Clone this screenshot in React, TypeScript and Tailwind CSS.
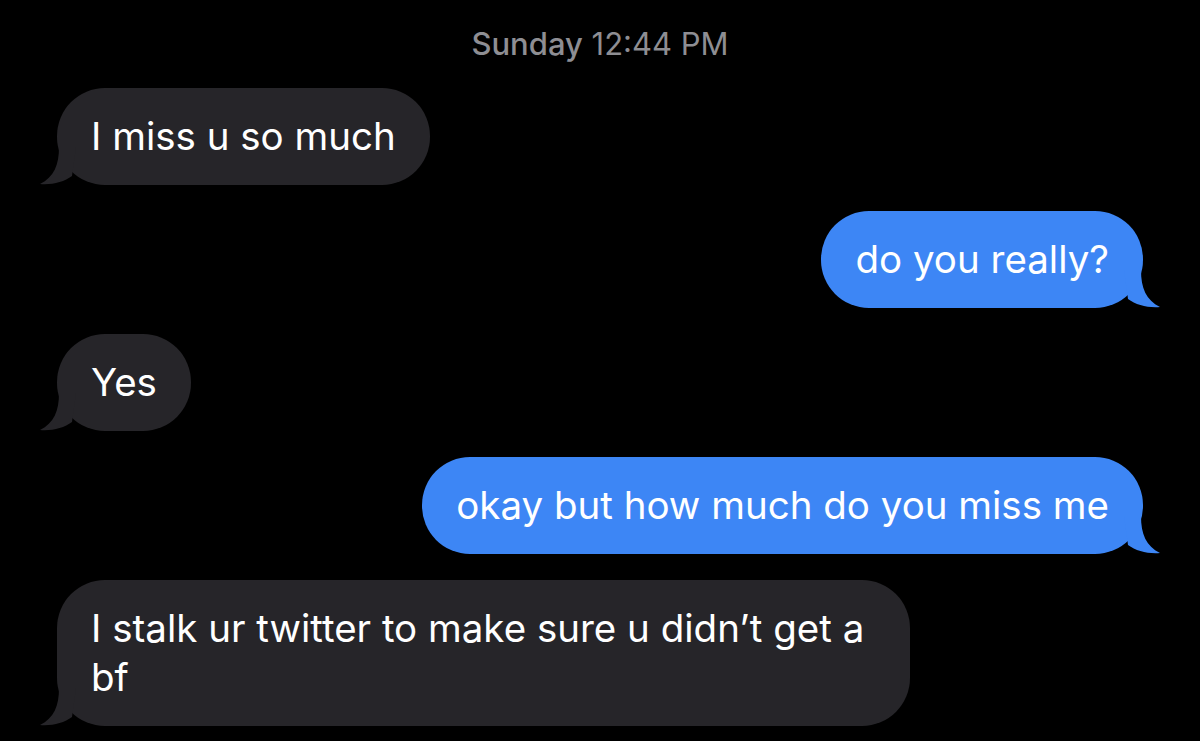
import React from "react";

const GRAY = "#262529";
const BLUE = "#3d86f5";

const Tail = ({ side, color }: { side: "left" | "right"; color: string }) => {
    const isLeft = side === "left";
    return (
        <svg
            width="36"
            height="38"
            viewBox="0 0 36 38"
            className={isLeft ? "absolute -left-[17px] bottom-0" : "absolute -right-[17px] bottom-0 -scale-x-100"}
        >
            <path d="M19 0 C19 18 14 30 0 37 C12 38 24 35 32 29 L36 0 Z" fill={color} />
        </svg>
    );
};

const Bubble = ({ side, children, className = "" }: { side: "left" | "right"; children: React.ReactNode; className?: string }) => {
    const color = side === "left" ? GRAY : BLUE;
    return (
        <div className={side === "left" ? "flex justify-start pl-[57px]" : "flex justify-end pr-[57px]"}>
            <div className={`relative rounded-[48px] ${className}`} style={{ backgroundColor: color }}>
                <Tail side={side} color={color} />
                <div className="relative whitespace-nowrap px-[34px] py-[24px] text-[38.5px] leading-[49px] text-white">{children}</div>
            </div>
        </div>
    );
};

export default function App() {
    return (
        <div className="w-[1200px] h-[741px] bg-black overflow-hidden" style={{ fontFamily: "Inter, 'Open Sans', sans-serif" }}>
            <div className="flex justify-center pt-[25px] pb-[25px] text-[31px] leading-[38px] text-[#8e8e93]">
                <span><span className="font-medium">Sunday</span> 12:44 PM</span>
            </div>
            <div className="flex flex-col gap-[26px]">
                <Bubble side="left">I miss u so much</Bubble>
                <Bubble side="right">do you really?</Bubble>
                <Bubble side="left">Yes</Bubble>
                <Bubble side="right">okay but how much do you miss me</Bubble>
                <Bubble side="left" className="w-[853px]">
                    I stalk ur twitter to make sure u didn’t get a<br />bf
                </Bubble>
            </div>
        </div>
    );
}
